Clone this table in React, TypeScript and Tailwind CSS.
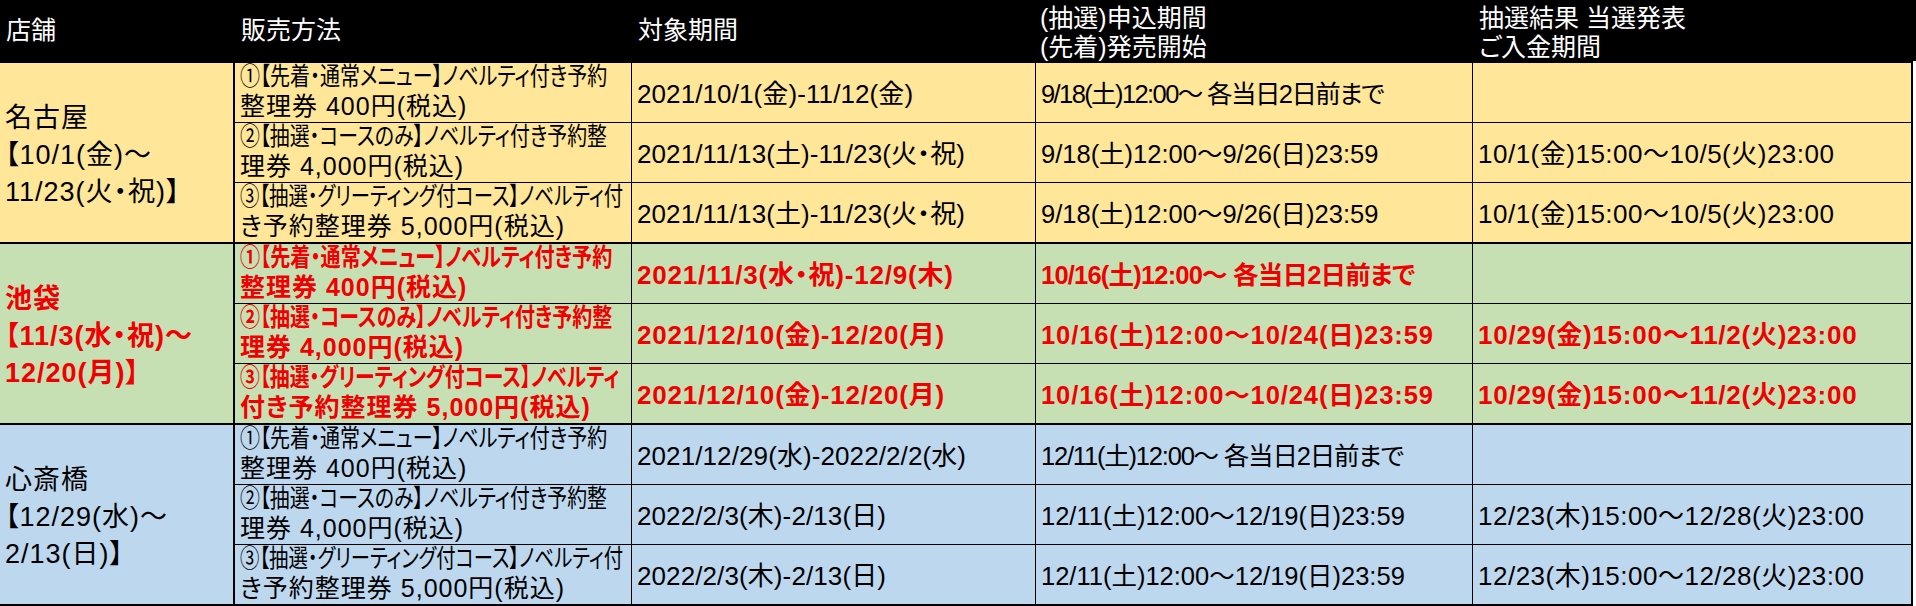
import React from 'react';

interface Row {
    method: [string, string];
    fit: string;
    period: string;
    apply: string;
    applyFit?: string;
    result: string;
}

interface Group {
    name: [string, string, string];
    bg: string;
    red: boolean;
    rows: Row[];
}

const M1: [string, string] = ['①【先着・通常メニュー】ノベルティ付き予約', '整理券 400円(税込)'];
const M2: [string, string] = ['②【抽選・コースのみ】ノベルティ付き予約整', '理券 4,000円(税込)'];
const M3: [string, string] = ['③【抽選・グリーティング付コース】ノベルティ付', 'き予約整理券 5,000円(税込)'];

// line 1 of each method is squeezed horizontally to the width it has in the sheet
const groups: Group[] = [
    {
        name: ['名古屋', '【10/1(金)～', '11/23(火・祝)】'],
        bg: 'bg-[#ffe699]',
        red: false,
        rows: [
            { method: M1, fit: 'scale-x-[0.8]', period: '2021/10/1(金)-11/12(金)', apply: '9/18(土)12:00～ 各当日2日前まで', applyFit: 'tracking-[-1.6px]', result: '' },
            { method: M2, fit: 'scale-x-[0.795]', period: '2021/11/13(土)-11/23(火・祝)', apply: '9/18(土)12:00～9/26(日)23:59', result: '10/1(金)15:00～10/5(火)23:00' },
            { method: M3, fit: 'scale-x-[0.775]', period: '2021/11/13(土)-11/23(火・祝)', apply: '9/18(土)12:00～9/26(日)23:59', result: '10/1(金)15:00～10/5(火)23:00' },
        ],
    },
    {
        name: ['池袋', '【11/3(水・祝)～', '12/20(月)】'],
        bg: 'bg-[#c6e0b4]',
        red: true,
        rows: [
            { method: M1, fit: 'scale-x-[0.805]', period: '2021/11/3(水・祝)-12/9(木)', apply: '10/16(土)12:00～ 各当日2日前まで', applyFit: 'tracking-[-0.8px]', result: '' },
            { method: M2, fit: 'scale-x-[0.8]', period: '2021/12/10(金)-12/20(月)', apply: '10/16(土)12:00～10/24(日)23:59', applyFit: 'tracking-[0.9px]', result: '10/29(金)15:00～11/2(火)23:00' },
            { method: ['③【抽選・グリーティング付コース】ノベルティ', '付き予約整理券 5,000円(税込)'], fit: 'scale-x-[0.795]', period: '2021/12/10(金)-12/20(月)', apply: '10/16(土)12:00～10/24(日)23:59', applyFit: 'tracking-[0.9px]', result: '10/29(金)15:00～11/2(火)23:00' },
        ],
    },
    {
        name: ['心斎橋', '【12/29(水)～', '2/13(日)】'],
        bg: 'bg-[#bdd7ee]',
        red: false,
        rows: [
            { method: M1, fit: 'scale-x-[0.8]', period: '2021/12/29(水)-2022/2/2(水)', apply: '12/11(土)12:00～ 各当日2日前まで', applyFit: 'tracking-[-1.2px]', result: '' },
            { method: M2, fit: 'scale-x-[0.795]', period: '2022/2/3(木)-2/13(日)', apply: '12/11(土)12:00～12/19(日)23:59', result: '12/23(木)15:00～12/28(火)23:00' },
            { method: M3, fit: 'scale-x-[0.775]', period: '2022/2/3(木)-2/13(日)', apply: '12/11(土)12:00～12/19(日)23:59', result: '12/23(木)15:00～12/28(火)23:00' },
        ],
    },
];

const Cell = ({ children, className = '', last = false }: { children?: React.ReactNode; className?: string; last?: boolean }) => (
    <div className={`flex items-center pl-[5px] pt-[3px] whitespace-nowrap ${last ? '' : 'border-r border-black'} ${className}`}>
        {children}
    </div>
);

export default function App() {
    return (
        <div className="w-[1916px] h-[606px] bg-white overflow-hidden text-black [font-family:'Liberation_Sans','Noto_Sans_CJK_JP',sans-serif] [font-feature-settings:'palt']">
            {/* header */}
            <div className="grid grid-cols-[235px_397px_404px_437px_1fr] h-[61px] bg-black text-white text-[25px] leading-[29px]">
                <div className="flex items-center pl-[6px] pb-[2px]">店舗</div>
                <div className="flex items-center pl-[6px] pb-[2px]">販売方法</div>
                <div className="flex items-center pl-[6px] pb-[2px]">対象期間</div>
                <div className="flex flex-col justify-center pl-[4px] pt-[4px]">
                    <span>(抽選)申込期間</span>
                    <span>(先着)発売開始</span>
                </div>
                <div className="flex flex-col justify-center pl-[6px] pt-[4px]">
                    <span>抽選結果 当選発表</span>
                    <span>ご入金期間</span>
                </div>
            </div>

            <div className="w-[1913px] border-r-2 border-b-2 border-black">
                {groups.map((g) => (
                    <div
                        key={g.name[0]}
                        className={`flex border-t-2 border-black ${g.bg} ${g.red ? 'text-[#f00000] font-bold' : ''}`}
                    >
                        <div className="w-[235px] shrink-0 border-r-2 border-black flex flex-col justify-center pl-[5px] pt-[6px] text-[27px] leading-[37px] tracking-[1px] whitespace-nowrap">
                            {g.name.map((n) => (
                                <span key={n}>{n}</span>
                            ))}
                        </div>
                        <div className="flex-1 flex flex-col">
                            {g.rows.map((r, i) => (
                                <div
                                    key={i}
                                    className={`grid grid-cols-[397px_404px_437px_1fr] grid-rows-[59px] text-[26px] ${i > 0 ? 'h-[60px] border-t border-black' : 'h-[59px]'}`}
                                >
                                    <div className="flex items-center pl-[5px] border-r border-black whitespace-nowrap min-h-0 text-[25px]">
                                        <div className="flex flex-col items-start leading-[30px] mb-[3px]">
                                            <span className={`inline-block origin-left ${r.fit}`}>{r.method[0]}</span>
                                            <span className="tracking-[1px]">{r.method[1]}</span>
                                        </div>
                                    </div>
                                    <Cell className={g.red ? 'tracking-[0.8px]' : 'tracking-[0.1px]'}>{r.period}</Cell>
                                    <Cell className={`text-[25.5px] ${r.applyFit ?? ''}`}>{r.apply}</Cell>
                                    <Cell last className={g.red ? 'tracking-[0.75px]' : 'tracking-[0.5px]'}>{r.result}</Cell>
                                </div>
                            ))}
                        </div>
                    </div>
                ))}
            </div>
        </div>
    );
}
